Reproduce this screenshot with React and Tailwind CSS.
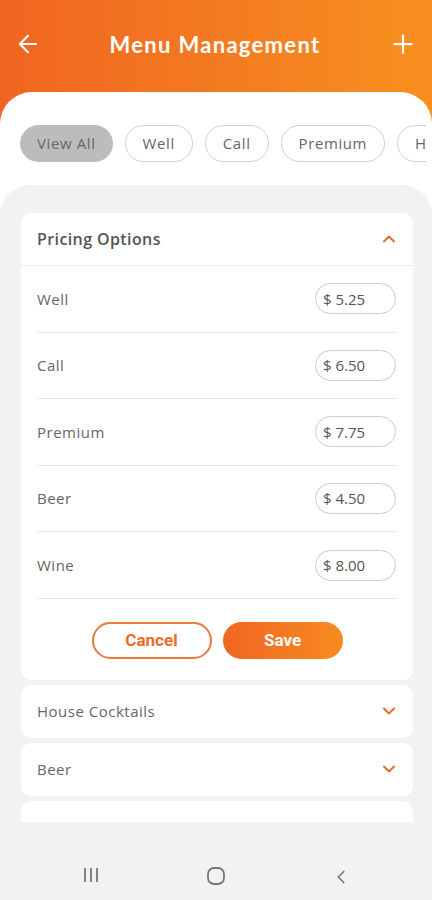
import React from "react";
import { ArrowLeft, Plus, ChevronUp, ChevronDown, ChevronLeft } from "lucide-react";

const chips = ["View All", "Well", "Call", "Premium", "House Cocktails"];

const prices = [
  { name: "Well", price: "5.25" },
  { name: "Call", price: "6.50" },
  { name: "Premium", price: "7.75" },
  { name: "Beer", price: "4.50" },
  { name: "Wine", price: "8.00" },
];

const others = ["House Cocktails", "Beer", "Wine"];

function App() {
  return (
    <div
      className="w-[432px] h-[900px] flex flex-col overflow-hidden bg-gradient-to-r from-[#f16522] via-[#f37a20] to-[#f8901f]"
      style={{ fontFamily: "'Open Sans', 'Liberation Sans', sans-serif" }}
    >
      {/* Header */}
      <div className="h-[92px] shrink-0 flex items-center justify-between px-[14px] pb-[4px] text-white">
        <ArrowLeft size={28} strokeWidth={1.8} />
        <h1 className="text-[22px] font-bold tracking-[1.3px]" style={{ fontFamily: "Lato, sans-serif" }}>
          Menu Management
        </h1>
        <Plus size={30} strokeWidth={1.8} />
      </div>

      {/* Body */}
      <div className="flex-1 flex flex-col bg-white rounded-t-[32px] min-h-0">
        {/* Chips */}
        <div className="w-[426px] flex gap-[12px] pl-[20px] pt-[33px] overflow-hidden shrink-0">
          {chips.map((c, i) => (
            <div
              key={c}
              className={
                i === 0
                  ? "shrink-0 h-[37px] px-[17px] flex items-center rounded-full bg-[#bcbcbc] text-[#666] text-[15px] tracking-[0.6px]"
                  : "shrink-0 h-[37px] px-[17px] flex items-center rounded-full border border-[#cfcfcf] text-[#666] text-[15px] tracking-[0.6px]"
              }
            >
              {c}
            </div>
          ))}
        </div>

        {/* Gray panel */}
        <div className="mt-[23px] flex-1 flex flex-col bg-[#f2f2f2] rounded-t-[30px] min-h-0">
          <div className="h-[637px] shrink-0 overflow-hidden pl-[21px] pr-[19px] pt-[28px] flex flex-col gap-[5px]">
            {/* Pricing card */}
            <div className="bg-white rounded-[10px] shrink-0">
              <div className="h-[53px] flex items-center justify-between pl-[16px] pr-[14px] border-b border-[#ececec]">
                <span className="text-[16px] font-semibold text-[#555] tracking-[0.4px]">Pricing Options</span>
                <ChevronUp size={20} strokeWidth={2.4} className="text-[#e8692a]" />
              </div>
              <div className="pl-[16px] pr-[17px]">
                {prices.map((p) => (
                  <div
                    key={p.name}
                    className="h-[66.6px] flex items-center justify-between border-b border-[#e8e8e8]"
                  >
                    <span className="text-[15px] text-[#666] tracking-[0.5px]">{p.name}</span>
                    <div className="w-[81px] h-[31px] rounded-full border border-[#cccccc] flex items-center pl-[7px] text-[15px] text-[#555]">
                      $ {p.price}
                    </div>
                  </div>
                ))}
              </div>
              <div
                className="flex justify-center gap-[11px] pt-[23px] pb-[21px]"
                style={{ fontFamily: "Roboto, sans-serif" }}
              >
                <button className="w-[120px] h-[37px] rounded-full border-2 border-[#ec7a3a] text-[#ee6c24] text-[17px] font-bold">
                  Cancel
                </button>
                <button className="w-[120px] h-[37px] rounded-full bg-gradient-to-r from-[#f16522] to-[#f78b1f] text-white text-[17px] font-bold">
                  Save
                </button>
              </div>
            </div>

            {others.map((o) => (
              <div
                key={o}
                className="h-[53px] shrink-0 bg-white rounded-[10px] flex items-center justify-between pl-[16px] pr-[14px]"
              >
                <span className="text-[15px] text-[#666] tracking-[0.5px]">{o}</span>
                <ChevronDown size={20} strokeWidth={2.4} className="text-[#e8692a]" />
              </div>
            ))}
          </div>

          {/* Nav bar */}
          <div className="flex-1 flex items-start justify-center gap-[85px] pt-[44px] text-[#777]">
            <div className="w-[40px] flex justify-center">
              <svg width="18" height="18" viewBox="0 0 18 18" fill="none" stroke="currentColor" strokeWidth="1.8">
                <line x1="3" y1="2" x2="3" y2="16" />
                <line x1="9" y1="2" x2="9" y2="16" />
                <line x1="15" y1="2" x2="15" y2="16" />
              </svg>
            </div>
            <div className="w-[40px] flex justify-center">
              <svg width="20" height="20" viewBox="0 0 20 20" fill="none" stroke="currentColor" strokeWidth="1.8">
                <rect x="2" y="2" width="16" height="16" rx="6" />
              </svg>
            </div>
            <div className="w-[40px] flex justify-center">
              <ChevronLeft size={22} strokeWidth={1.8} />
            </div>
          </div>
        </div>
      </div>
    </div>
  );
}

export default App;
